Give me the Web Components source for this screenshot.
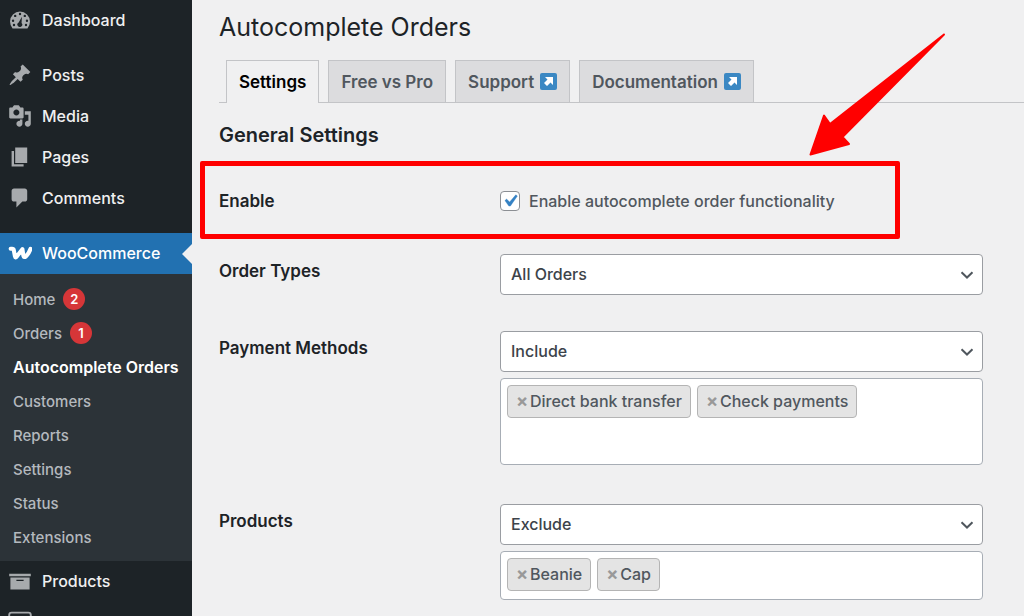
<!DOCTYPE html>
<html lang="en">
<head>
<meta charset="utf-8">
<title>Autocomplete Orders</title>
<style>
  html { scrollbar-width: none; }
  body { margin: 0; background: #f0f0f1; font-family: Inter, "Liberation Sans", sans-serif; font-size: 16px; font-weight: 500; color: #3c434a; }
</style>
</head>
<body>
<admin-shell></admin-shell>
<script>
const ICONS = {
  dashboard: '<path fill-rule="evenodd" d="M3.8 17h12.4A8.4 8.4 0 0 0 18.3 11.3a8.3 8.3 0 0 0-16.6 0A8.4 8.4 0 0 0 3.8 17zM10 4a1 1 0 1 1 0 2 1 1 0 0 1 0-2zM6 5.6a1 1 0 1 1 0 2 1 1 0 0 1 0-2zM14 5.6a1 1 0 1 1 0 2 1 1 0 0 1 0-2zM4.2 9.6a1 1 0 1 1 0 2 1 1 0 0 1 0-2zM15.8 9.6a1 1 0 1 1 0 2 1 1 0 0 1 0-2zM5 13.2a1 1 0 1 1 0 2 1 1 0 0 1 0-2zM15 13.2a1 1 0 1 1 0 2 1 1 0 0 1 0-2zM11.600 7.200l-.3 5.200a2 2 0 1 1-2.400-.4z"/>',
  posts: '<path d="M10.44 3.02l1.82-1.82 6.36 6.35-1.83 1.82c-1.05-.68-2.48-.57-3.41.36l-.75.75c-.92.93-1.04 2.35-.35 3.41l-1.83 1.82-2.41-2.41-2.8 2.79c-.42.42-3.38 2.71-3.8 2.29s1.86-3.39 2.28-3.81l2.79-2.79L4.1 9.36l1.83-1.82c1.05.69 2.48.57 3.4-.36l.75-.75c.93-.92 1.05-2.35.36-3.41z"/>',
  media: '<path d="M13 11V4c0-.55-.45-1-1-1h-1.67L9 1H5L3.67 3H2c-.55 0-1 .45-1 1v7c0 .55.45 1 1 1h10c.55 0 1-.45 1-1zM7 4.5c1.38 0 2.5 1.12 2.5 2.5S8.38 9.5 7 9.5 4.5 8.38 4.5 7 5.62 4.5 7 4.5zM14 6h5v10.5c0 1.38-1.12 2.5-2.5 2.5S14 17.88 14 16.5s1.12-2.5 2.5-2.5c.17 0 .34.02.5.05V9h-3V6zm-4 8.05V13h2v3.5c0 1.38-1.12 2.5-2.5 2.5S7 17.88 7 16.5 8.12 14 9.5 14c.17 0 .34.02.5.05z"/>',
  pages: '<path d="M6 15V2h10v13H6zm-1 1h8v2H3V5h2v11z"/>',
  comments: '<path d="M5 2h9c1.1 0 2 .9 2 2v7c0 1.1-.9 2-2 2h-2l-5 5v-5H5c-1.1 0-2-.9-2-2V4c0-1.1.9-2 2-2z"/>',
  woo: '<path d="M2.200 6.500h1.200q1.200 0 1.400 1l1 5.300q.4 1.800 1.500.2L12 6.800l.8 5.400q.5 2 2.100.6 2.400-2.100 3.900-6.300" fill="none" stroke="currentColor" stroke-width="3.400" stroke-linecap="round" stroke-linejoin="round"/>',
  products: '<path d="M19 4v2H1V4h18zM2 7h16v10H2V7zm11 3V9H7v1h6z"/>',
  payments: '<rect x="1" y="2.2" width="18" height="15" rx="2" fill="none" stroke="currentColor" stroke-width="1.6"/><path d="M1 6h18v3H1z"/>'
};

class AdminShell extends HTMLElement {
  constructor() {
    super();
    this.attachShadow({ mode: 'open' }).innerHTML = `
      <style>
        :host { display: grid; grid-template-columns: 192px minmax(0, 1fr); min-height: 100vh; }
      </style>
      <admin-menu></admin-menu>
      <orders-page></orders-page>`;
  }
}

class MenuItem extends HTMLElement {
  connectedCallback() {
    if (this.shadowRoot) return;
    const current = this.hasAttribute('current');
    const label = this.getAttribute('label');
    this.attachShadow({ mode: 'open' }).innerHTML = `
      <style>
        :host { display: block; }
        a { position: relative; display: flex; align-items: center; gap: 10px; box-sizing: border-box; height: 41px; padding: 0 8px 2px; color: #f0f0f1; text-decoration: none; }
        svg { width: 24px; height: 24px; flex: none; fill: currentColor; color: #a7aaad; }
        :host([current]) a { background: #2271b1; color: #fff; }
        :host([current]) svg { color: #fff; }
        :host([current]) a::after { content: ""; position: absolute; right: 0; top: 11px; border: 10px solid transparent; border-left: 0; border-right-color: #f0f0f1; }
      </style>
      <a href="#" ${label ? `aria-label="${label}"` : ''} ${current ? 'aria-current="true"' : ''}>
        <svg viewBox="0 0 20 20" aria-hidden="true">${ICONS[this.getAttribute('icon')]}</svg><slot></slot>
      </a>`;
  }
}

class SubmenuItem extends HTMLElement {
  connectedCallback() {
    if (this.shadowRoot) return;
    const count = this.getAttribute('count');
    this.attachShadow({ mode: 'open' }).innerHTML = `
      <style>
        :host { display: block; }
        a { display: flex; align-items: center; gap: 8px; height: 34px; padding: 0 13px; color: #b4b9be; text-decoration: none; font-size: 15px; white-space: nowrap; }
        :host([current]) a { color: #fff; font-size: 16px; font-weight: 600; }
        .count { display: grid; place-items: center; width: 22px; height: 22px; border-radius: 11px; background: #d63638; color: #fff; font-size: 13px; font-weight: 600; }
      </style>
      <a href="#"><slot></slot>${count ? `<span class="count">${count}</span>` : ''}</a>`;
  }
}

class AdminMenu extends HTMLElement {
  constructor() {
    super();
    this.attachShadow({ mode: 'open' }).innerHTML = `
      <style>
        :host { display: block; background: #1d2327; }
        nav, .group { display: flex; flex-direction: column; }
        nav { gap: 14px; }
        .submenu { padding: 8px 0 7px; background: #2c3338; }
      </style>
      <nav aria-label="Main menu">
        <menu-item icon="dashboard">Dashboard</menu-item>
        <div class="group">
          <menu-item icon="posts">Posts</menu-item>
          <menu-item icon="media">Media</menu-item>
          <menu-item icon="pages">Pages</menu-item>
          <menu-item icon="comments">Comments</menu-item>
        </div>
        <div class="group">
          <menu-item icon="woo" current>WooCommerce</menu-item>
          <div class="submenu">
            <submenu-item count="2">Home</submenu-item>
            <submenu-item count="1">Orders</submenu-item>
            <submenu-item current>Autocomplete Orders</submenu-item>
            <submenu-item>Customers</submenu-item>
            <submenu-item>Reports</submenu-item>
            <submenu-item>Settings</submenu-item>
            <submenu-item>Status</submenu-item>
            <submenu-item>Extensions</submenu-item>
          </div>
          <menu-item icon="products">Products</menu-item>
          <menu-item icon="payments" label="Payments"></menu-item>
        </div>
      </nav>`;
  }
}

class NavTab extends HTMLElement {
  connectedCallback() {
    if (this.shadowRoot) return;
    const icon = this.hasAttribute('external')
      ? '<svg viewBox="0 0 17 17" aria-hidden="true"><rect width="17" height="17" rx="2" fill="#3b88c3"/><path d="M5 4h8v8l-2.500-2.500-3.500 3.500-3-3 3.500-3.500z" fill="#fff"/></svg>' : '';
    this.attachShadow({ mode: 'open' }).innerHTML = `
      <style>
        :host { display: block; }
        a { display: flex; align-items: center; gap: 6px; height: 41px; padding: 0 12px; border: 1px solid #c3c4c7; border-bottom: 0; background: #dcdcde; color: #50575e; font-size: 17px; font-weight: 600; text-decoration: none; white-space: nowrap; }
        :host([active]) { margin-bottom: -1px; }
        :host([active]) a { padding-bottom: 1px; background: #f0f0f1; color: #000; }
        svg { width: 17px; height: 17px; }
      </style>
      <a href="#"><slot></slot>${icon}</a>`;
  }
}

class SettingRow extends HTMLElement {
  constructor() {
    super();
    this.attachShadow({ mode: 'open' }).innerHTML = `
      <style>
        :host { position: relative; display: grid; grid-template-columns: 281px minmax(0, 1fr); padding: 18px 41px 18px 0; }
        .label { line-height: 34px; font-size: 17px; font-weight: 600; color: #1d2327; }
        .control { display: flex; flex-direction: column; gap: 6px; }
      </style>
      <div class="label"><slot name="label"></slot></div>
      <div class="control"><slot></slot></div>
      <slot name="overlay"></slot>`;
  }
}

class TagBox extends HTMLElement {
  connectedCallback() {
    if (this.shadowRoot) return;
    const tags = this.getAttribute('tags').split(',');
    this.attachShadow({ mode: 'open' }).innerHTML = `
      <style>
        :host { display: block; box-sizing: border-box; min-height: 49px; margin-bottom: 3px; padding: 6px; border: 1px solid #a7adb5; border-radius: 4px; background: #fff; }
        :host([tall]) { min-height: 87px; }
        ul { display: flex; flex-wrap: wrap; gap: 6px; margin: 0; padding: 0; list-style: none; }
        li { display: flex; align-items: center; box-sizing: border-box; height: 33px; padding: 0 8px 2px; border: 1px solid #b4b4b4; border-radius: 4px; background: #e4e4e4; color: #50575e; }
        button { width: 14px; padding: 0; border: 0; background: none; color: #999; font: 700 18px Inter, sans-serif; text-align: left; }
      </style>
      <ul>${tags.map(t => `<li><button type="button" aria-label="Remove ${t}">×</button><span>${t}</span></li>`).join('')}</ul>`;
  }
}

/* Red frame round a row, with an arrow that points at it. */
class CalloutMark extends HTMLElement {
  constructor() {
    super();
    this.attachShadow({ mode: 'open' }).innerHTML = `
      <style>
        :host { position: absolute; top: -5px; bottom: -3px; left: -19px; right: 124px; border: 5px solid #f00; border-radius: 2px; pointer-events: none; }
        svg { position: absolute; top: -134px; right: -53px; width: 140px; height: 126px; }
      </style>
      <svg viewBox="0 0 140 126" aria-hidden="true"><path d="M136 2.500L22 92l-6-8.500L2.500 122.500 41 112l-6.500-7z" fill="#f00" stroke="#f00" stroke-width="2" stroke-linejoin="round"/></svg>`;
  }
}

class OrdersPage extends HTMLElement {
  constructor() {
    super();
    this.attachShadow({ mode: 'open' }).innerHTML = `
      <style>
        :host { display: block; padding: 8px 0 0 27px; }
        h1 { margin: 0; font-size: 25px; font-weight: 400; line-height: 38px; color: #1d2327; }
        .tabs { display: flex; gap: 9px; margin-top: 14px; padding-left: 7px; border-bottom: 1px solid #c3c4c7; }
        h2 { margin: 20px 0 19px; font-size: 20px; font-weight: 600; line-height: 24px; color: #1d2327; }
        .check { display: flex; align-items: center; gap: 9px; height: 34px; color: #50575e; }
        input { appearance: none; box-sizing: border-box; width: 20px; height: 20px; margin: 0; border: 1px solid #8c8f94; border-radius: 4px; background: #fff; }
        input:checked { background: #fff url("data:image/svg+xml,%3Csvg xmlns='http://www.w3.org/2000/svg' viewBox='0 0 20 20'%3E%3Cpath d='M14.83 4.89l1.34.94-5.81 8.38H9.02L5.78 9.67l1.34-1.25 2.57 2.4z' fill='%233582c4' stroke='%233582c4' stroke-width='.3'/%3E%3C/svg%3E") center / 24px no-repeat; }
        select { appearance: none; box-sizing: border-box; width: 100%; height: 41px; padding: 0 36px 2px 10px; border: 1px solid #9a9da2; border-radius: 4px; color: #3c434a; font: inherit;
          background: #fff url("data:image/svg+xml,%3Csvg xmlns='http://www.w3.org/2000/svg' width='14' height='8' viewBox='0 0 14 8'%3E%3Cpath d='M1.500 1.200L7 6.500l5.500-5.300' fill='none' stroke='%2350575e' stroke-width='2'/%3E%3C/svg%3E") right 8px center no-repeat; }
      </style>
      <main>
        <h1>Autocomplete Orders</h1>
        <nav class="tabs" aria-label="Sections">
          <nav-tab active>Settings</nav-tab>
          <nav-tab>Free vs Pro</nav-tab>
          <nav-tab external>Support</nav-tab>
          <nav-tab external>Documentation</nav-tab>
        </nav>
        <h2>General Settings</h2>
        <form>
          <setting-row>
            <span slot="label">Enable</span>
            <label class="check"><input type="checkbox" checked>Enable autocomplete order functionality</label>
            <callout-mark slot="overlay"></callout-mark>
          </setting-row>
          <setting-row>
            <label slot="label" for="types">Order Types</label>
            <select id="types"><option>All Orders</option></select>
          </setting-row>
          <setting-row>
            <label slot="label" for="payment">Payment Methods</label>
            <select id="payment"><option>Include</option></select>
            <tag-box tall tags="Direct bank transfer,Check payments"></tag-box>
          </setting-row>
          <setting-row>
            <label slot="label" for="products">Products</label>
            <select id="products"><option>Exclude</option></select>
            <tag-box tags="Beanie,Cap"></tag-box>
          </setting-row>
        </form>
      </main>`;
  }
}

customElements.define('menu-item', MenuItem);
customElements.define('submenu-item', SubmenuItem);
customElements.define('admin-menu', AdminMenu);
customElements.define('nav-tab', NavTab);
customElements.define('setting-row', SettingRow);
customElements.define('tag-box', TagBox);
customElements.define('callout-mark', CalloutMark);
customElements.define('orders-page', OrdersPage);
customElements.define('admin-shell', AdminShell);
</script>
</body>
</html>
